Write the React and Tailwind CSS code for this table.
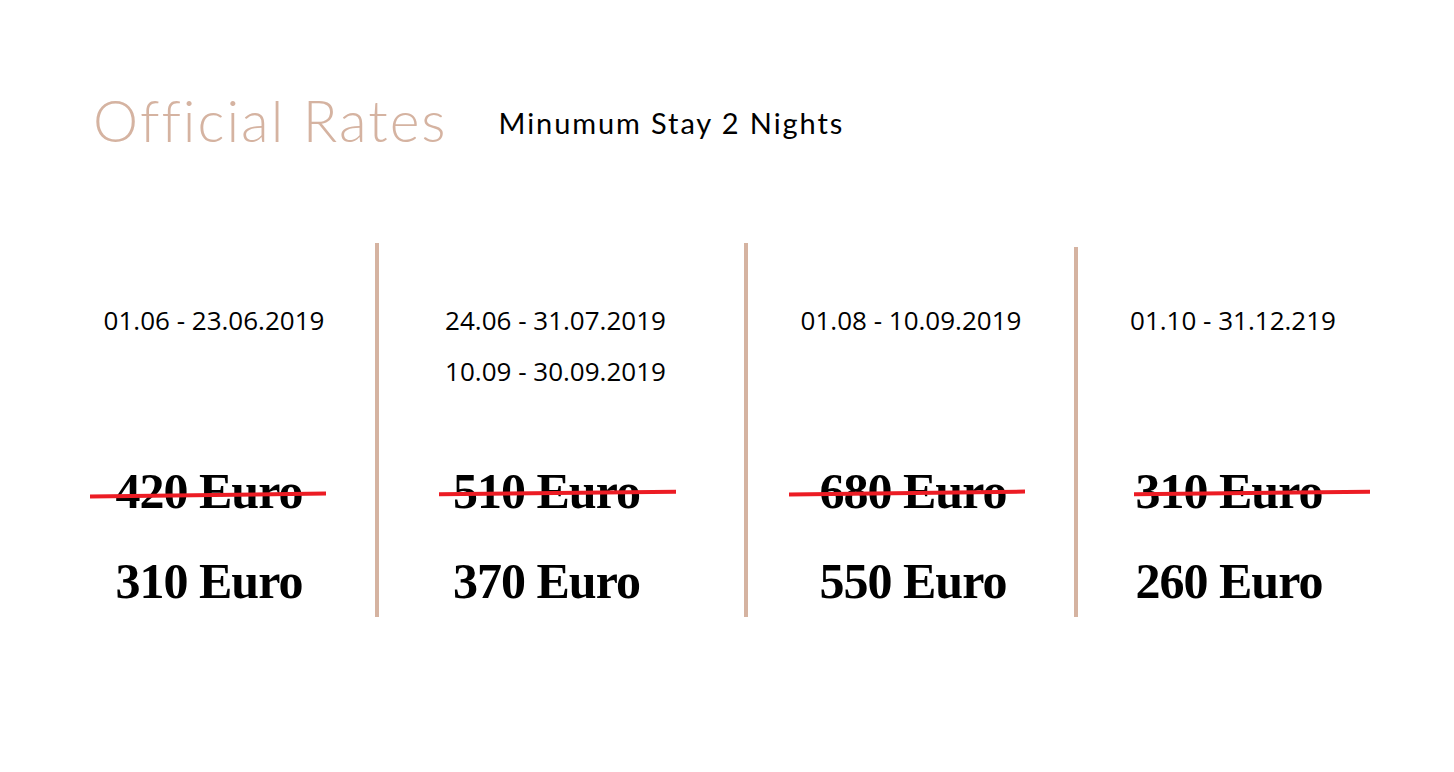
import React from 'react';

const columns = [
  {
    width: 'w-[322px]',
    dates: ['01.06 - 23.06.2019'],
    datesPad: '',
    pricePad: 'pr-[10px]',
    oldPrice: '420 Euro',
    price: '310 Euro',
    strike: 'left-[37px] w-[236px] top-[47px] -rotate-[0.7deg]',
  },
  {
    width: 'w-[365px]',
    dates: ['24.06 - 31.07.2019', '10.09 - 30.09.2019'],
    datesPad: 'pr-[12px]',
    pricePad: 'pr-[30px]',
    oldPrice: '510 Euro',
    price: '370 Euro',
    strike: 'left-[60px] w-[237px] top-[45px] -rotate-[0.6deg]',
  },
  {
    width: 'w-[326px]',
    dates: ['01.08 - 10.09.2019'],
    datesPad: '',
    pricePad: 'pl-[4px]',
    oldPrice: '680 Euro',
    price: '550 Euro',
    strike: 'left-[41px] w-[236px] top-[45px] -rotate-[0.7deg]',
  },
  {
    width: 'w-[310px]',
    dates: ['01.10 - 31.12.219'],
    datesPad: '',
    pricePad: 'pr-[8px]',
    oldPrice: '310 Euro',
    price: '260 Euro',
    strike: 'left-[56px] w-[236px] top-[45px] -rotate-[0.6deg]',
  },
];

// séparateur vertical entre les colonnes
function Divider({ short }) {
  return (
    <div
      className={`w-[4px] shrink-0 bg-[#d5b3a1] ${short ? 'mt-[4px] h-[370px]' : 'h-[374px]'}`}
    />
  );
}

function RateColumn({ col }) {
  return (
    <div className={`${col.width} shrink-0 pt-[52px] text-center`}>
      <div
        className={`h-[102px] text-[26px] leading-[51px] text-black ${col.datesPad}`}
        style={{ fontFamily: '"Open Sans", "Noto Sans", sans-serif' }}
      >
        {col.dates.map((d) => (
          <div key={d}>{d}</div>
        ))}
      </div>

      <div
        className={`relative mt-[49px] text-[50px] font-bold leading-[90px] tracking-[-1px] text-black ${col.pricePad}`}
        style={{ fontFamily: '"Liberation Serif", "DejaVu Serif", serif' }}
      >
        <div>{col.oldPrice}</div>
        <div className={`absolute h-[4px] bg-[#ec1c24] ${col.strike}`} />
        <div>{col.price}</div>
      </div>
    </div>
  );
}

export default function App() {
  return (
    <div className="min-h-screen w-full bg-white" style={{ fontFamily: 'Lato, sans-serif' }}>
      <div className="flex items-start pl-[93px] pt-[92px]">
        <h1 className="text-[57px] font-light leading-[57px] tracking-[2px] text-[#d5b3a1]">
          Official Rates
        </h1>
        <p className="ml-[51px] mt-[16px] text-[29px] leading-[29px] tracking-[1.9px] text-black">
          Minumum Stay 2 Nights
        </p>
      </div>

      <div className="mt-[94px] flex items-start pl-[53px]">
        <RateColumn col={columns[0]} />
        <Divider />
        <RateColumn col={columns[1]} />
        <Divider />
        <RateColumn col={columns[2]} />
        <Divider short />
        <RateColumn col={columns[3]} />
      </div>
    </div>
  );
}
